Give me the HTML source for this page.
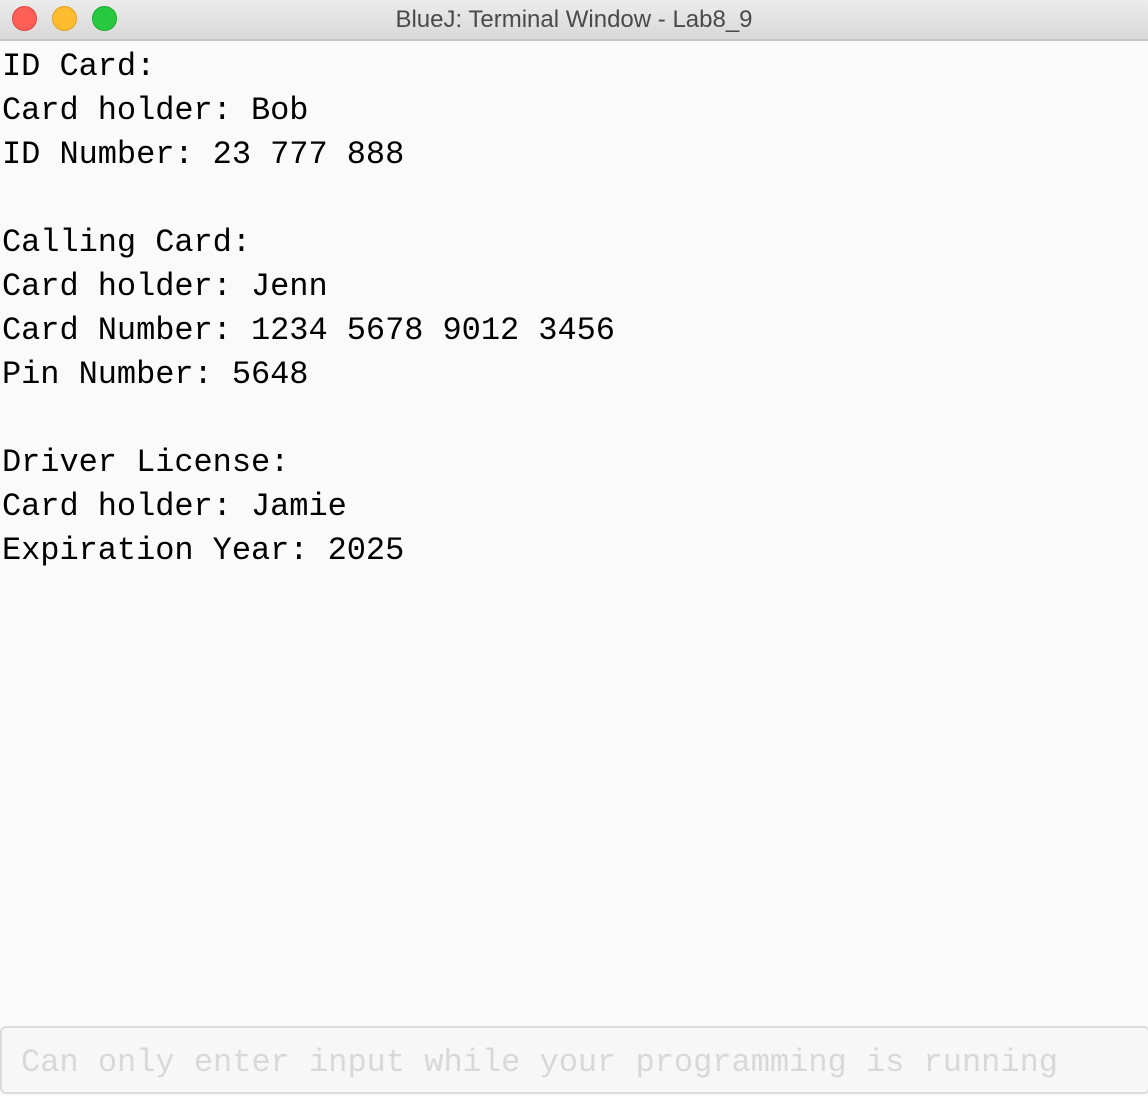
<!DOCTYPE html>
<html><head><style>
html,body{margin:0;padding:0;width:1148px;height:1096px;overflow:hidden;background:#fafafa;}
.tb{position:absolute;left:0;top:0;width:1148px;height:39px;background:linear-gradient(#ececec,#d8d8d8);border-bottom:2px solid #c4c4c4;}
.c{position:absolute;top:6px;width:23px;height:23px;border-radius:50%;}
.title{position:absolute;top:0;left:0;width:1148px;text-align:center;font:24px "Liberation Sans",sans-serif;line-height:39px;color:#4a4a4a;}
pre{position:absolute;left:2px;top:45px;margin:0;font:32px/44px "Liberation Mono",monospace;color:#000;letter-spacing:-0.05px;}
.in{position:absolute;left:0;top:1026px;width:1146px;height:64px;border:2px solid #dcdcdc;border-radius:6px;background:#f7f7f7;}
.ph{position:absolute;left:19px;top:15px;font:32px/40px "Liberation Mono",monospace;color:#d8d8d8;white-space:pre;}
</style></head><body>
<div class="tb">
<div class="c" style="left:12px;background:#fe5f57;border:1px solid #e0443e;"></div>
<div class="c" style="left:52px;background:#febc2e;border:1px solid #dea123;"></div>
<div class="c" style="left:92px;background:#28c840;border:1px solid #1aab29;"></div>
<div class="title">BlueJ: Terminal Window - Lab8_9</div>
</div>
<pre>ID Card:
Card holder: Bob
ID Number: 23 777 888

Calling Card:
Card holder: Jenn
Card Number: 1234 5678 9012 3456
Pin Number: 5648

Driver License:
Card holder: Jamie
Expiration Year: 2025</pre>
<div class="in"><div class="ph">Can only enter input while your programming is running</div></div>
</body></html>
